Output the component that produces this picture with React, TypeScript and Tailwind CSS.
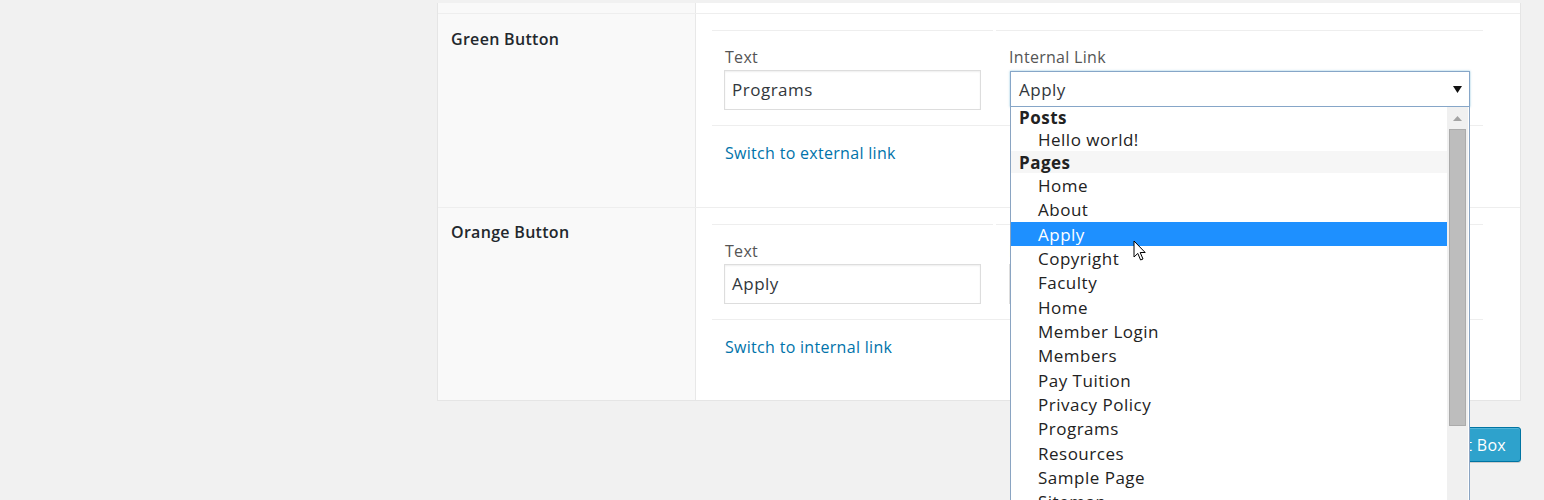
import React from "react";

const pages = [
  "Home",
  "About",
  "Apply",
  "Copyright",
  "Faculty",
  "Home",
  "Member Login",
  "Members",
  "Pay Tuition",
  "Privacy Policy",
  "Programs",
  "Resources",
  "Sample Page",
  "Sitemap",
  "Students",
];

const TextField = ({ value, wide }: { value: string; wide?: boolean }) => (
  <div
    className={
      (wide ? "w-[460px]" : "w-[257px]") +
      " h-[40px] border border-[#ddd] bg-white shadow-[inset_0_1px_2px_rgba(0,0,0,0.07)] pl-[7px] flex items-center text-[17px] tracking-[0.5px] text-[#32373c]"
    }
  >
    {value}
  </div>
);

const Cursor = () => (
  <svg
    className="absolute left-[122px] top-[133px]"
    width="14"
    height="22"
    viewBox="0 0 14 22"
  >
    <path
      d="M1 1 L1 17 L4.8 13.4 L7.6 20 L10 19 L7.2 12.5 L12.2 12.5 Z"
      fill="white"
      stroke="black"
      strokeWidth="1"
      strokeLinejoin="round"
    />
  </svg>
);

const Dropdown = () => (
  <div className="absolute left-0 top-full z-10 w-[460px] h-[400px] flex bg-white border-x border-b border-[#8aa4c2] text-[17px] tracking-[0.5px] text-[#222]">
    <div className="relative flex-1">
      <div className="h-[21px] leading-[22px] pl-[8px] font-bold">Posts</div>
      <div className="h-[23px] leading-[24px] pl-[27px]">Hello world!</div>
      <div className="h-[22px] leading-[23px] pl-[8px] font-bold bg-[#f6f6f6]">
        Pages
      </div>
      {pages.map((p, i) => (
        <div
          key={i}
          className={
            i === 2
              ? "h-[24.33px] leading-[25px] pl-[27px] bg-[#1e90ff] text-white"
              : "h-[24.33px] leading-[25px] pl-[27px]"
          }
        >
          {p}
        </div>
      ))}
      <Cursor />
    </div>
    <div className="w-[21px] mr-px bg-[#f0f0f0] flex flex-col">
      <div className="h-[22px] flex items-center justify-center">
        <svg width="9" height="5" viewBox="0 0 9 5">
          <polygon points="0,5 4.5,0 9,5" fill="#a3a3a3" />
        </svg>
      </div>
      <div className="h-[297px] mx-[2px] bg-[#bdbdbd] border border-[#ababab]" />
    </div>
  </div>
);

const LinkFields = ({
  value,
  internal,
}: {
  value: string;
  internal: boolean;
}) => (
  <div className="ml-[16px] mt-[16px] w-[771px]">
    <div className="flex gap-[3px]">
      <div className="w-[281px] border-t border-[#eee] pl-[12px] pt-[16px] pb-[15px]">
        <div className="pl-px text-[16px] tracking-[0.3px] leading-[20px] text-[#555]">
          Text
        </div>
        <div className="mt-[3px]">
          <TextField value={value} />
        </div>
      </div>
      <div className="flex-1 border-t border-[#eee] pl-[13px] pt-[16px]">
        {internal ? (
          <>
            <div className="text-[16px] tracking-[0.3px] leading-[20px] text-[#555]">
              Internal Link
            </div>
            <div className="relative mt-[4px] ml-px w-[460px]">
              <div className="h-[36px] border border-[#86a6c8] shadow-[0_0_2px_rgba(30,140,190,0.5)] bg-white flex items-center justify-between pl-[8px] pr-[7px] text-[17px] tracking-[0.5px] text-[#32373c]">
                <span className="pt-[2px]">Apply</span>
                <svg width="9" height="7" viewBox="0 0 9 7">
                  <polygon points="0,0 9,0 4.5,7" fill="#111" />
                </svg>
              </div>
              <Dropdown />
            </div>
          </>
        ) : (
          <>
            <div className="text-[16px] tracking-[0.3px] leading-[20px] text-[#555]">
              External URL
            </div>
            <div className="mt-[3px]">
              <TextField value="" wide />
            </div>
          </>
        )}
      </div>
    </div>
    <div className="border-t border-[#eee] pl-[13px] pt-[15px]">
      <a className="text-[16px] tracking-[0.3px] leading-[20px] text-[#0073aa] cursor-pointer">
        {internal ? "Switch to external link" : "Switch to internal link"}
      </a>
    </div>
  </div>
);

export default function App() {
  return (
    <div className="relative h-[500px] overflow-hidden bg-[#f1f1f1] pt-[3px] font-['Open_Sans',sans-serif]">
      <div className="ml-[437px] w-[1084px] border-x border-b border-[#e5e5e5] bg-white">
        <div className="grid grid-cols-[258px_1fr] h-[11px] border-b border-[#eee]">
          <div className="bg-[#f9f9f9] border-r border-[#e8e8e8]" />
          <div />
        </div>
        <div className="grid grid-cols-[258px_1fr] h-[194px] border-b border-[#eee]">
          <div className="bg-[#f9f9f9] border-r border-[#e8e8e8] pl-[13px] pt-[15px] text-[16px] tracking-[0.3px] leading-[20px] font-semibold text-[#23282d]">
            Green Button
          </div>
          <div>
            <LinkFields value="Programs" internal />
          </div>
        </div>
        <div className="grid grid-cols-[258px_1fr] h-[192px]">
          <div className="bg-[#f9f9f9] border-r border-[#e8e8e8] pl-[13px] pt-[14px] text-[16px] tracking-[0.3px] leading-[20px] font-semibold text-[#23282d]">
            Orange Button
          </div>
          <div>
            <LinkFields value="Apply" internal={false} />
          </div>
        </div>
      </div>
      <div className="ml-[437px] w-[1084px] mt-[26px] flex justify-end">
        <button className="h-[35px] px-[14px] rounded-[3px] bg-[#2ea2cc] border border-[#0074a2] text-white text-[16px] tracking-[0.3px] shadow-[inset_0_1px_0_rgba(120,200,230,0.5),0_1px_0_rgba(0,0,0,0.15)]">
          Add Text Box
        </button>
      </div>
    </div>
  );
}
